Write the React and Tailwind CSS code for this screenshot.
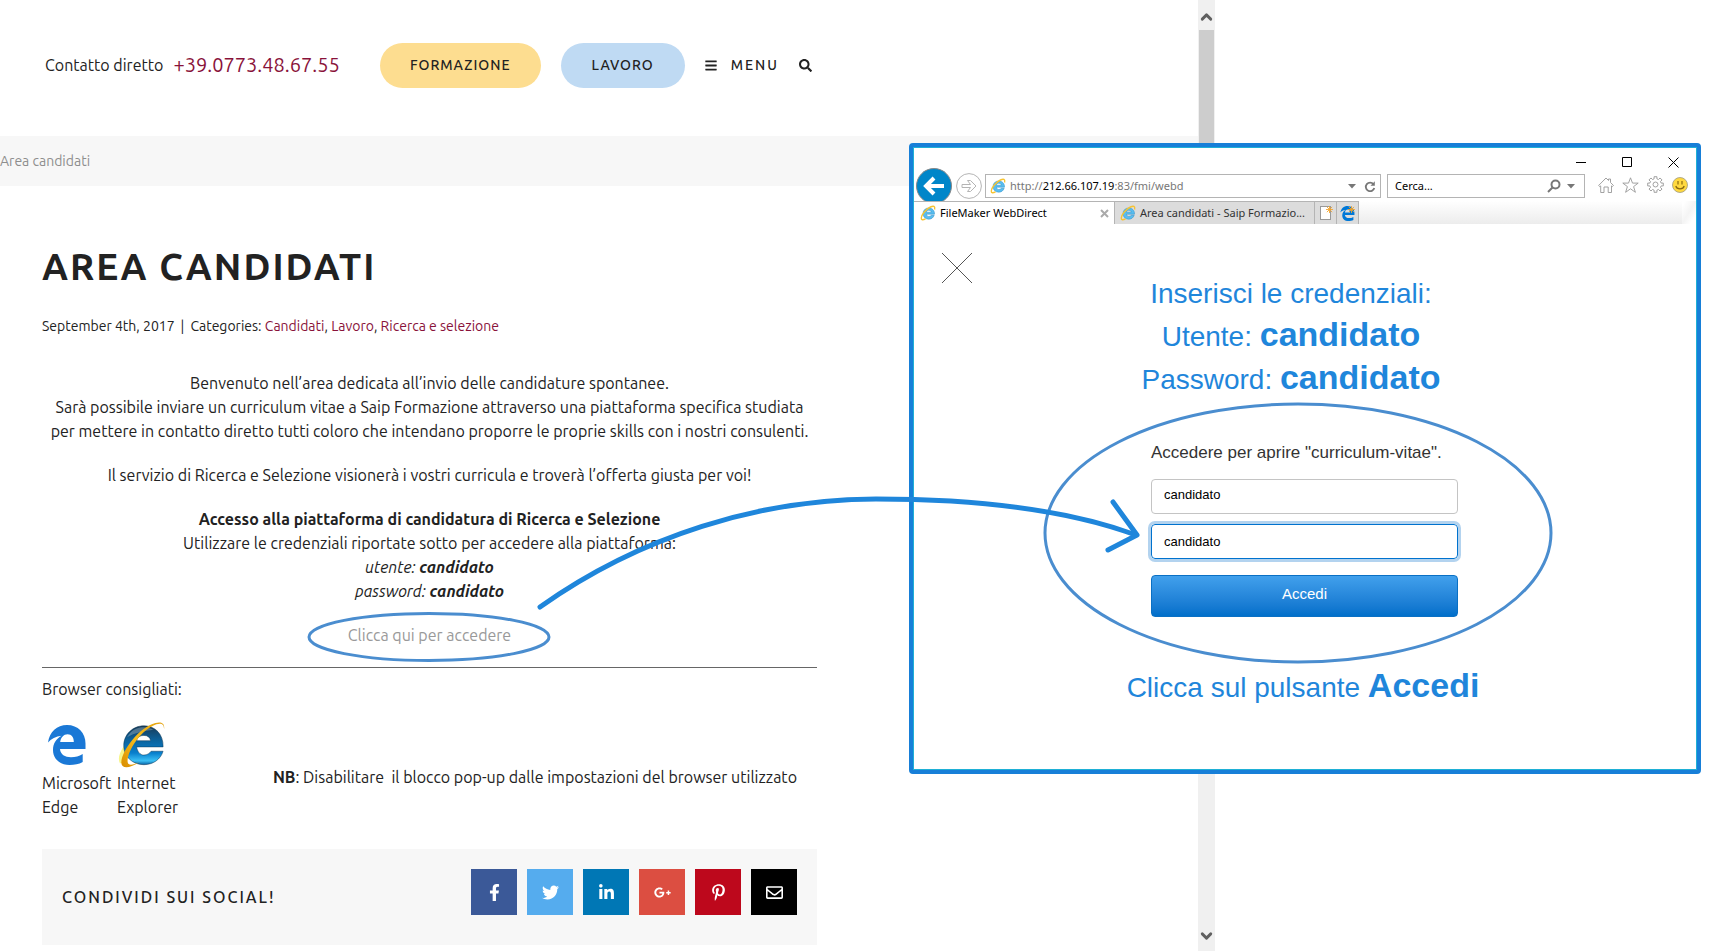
import React from 'react';
import { FaBars, FaSearch, FaFacebookF, FaTwitter, FaLinkedinIn, FaGooglePlusG, FaPinterestP, FaRegEnvelope } from 'react-icons/fa';
import { ChevronUp, ChevronDown } from 'lucide-react';

const SOCIAL = [
  { name: 'Facebook', Icon: FaFacebookF, color: 'bg-[#3b5998]' },
  { name: 'Twitter', Icon: FaTwitter, color: 'bg-[#55acee]' },
  { name: 'LinkedIn', Icon: FaLinkedinIn, color: 'bg-[#0077b5]' },
  { name: 'Google+', Icon: FaGooglePlusG, color: 'bg-[#dc4e41]' },
  { name: 'Pinterest', Icon: FaPinterestP, color: 'bg-[#bd081c]' },
  { name: 'Email', Icon: FaRegEnvelope, color: 'bg-black' },
];

function EdgeLogo({ className, fill = '#1a78d6' }) {
  return (
    <svg viewBox="0 0 38 40" className={className} fill={fill}>
      <path d="M0 17.500C1.500 7 9 0 19 0c11 0 18.500 8 18.500 18.500V24H12c.4 5.500 5 8.200 11 8.200 4.500 0 8-1 11.700-3.200V37c-4 2.200-8 3-13.200 3C11.500 40 5 33.500 5 25c0-6 3-11.200 8.500-14.200C8 11.500 3 14 0 17.500zM12.200 17h13.600c0-4.500-2-7.700-6.300-7.700-3.800 0-6.600 3.200-7.300 7.700z" />
    </svg>
  );
}

function ExplorerLogo() {
  return (
    <svg viewBox="0 0 50 50" className="mb-[2px] h-12 w-12">
      <defs>
        <linearGradient id="ieBody" x1="0" y1="0" x2="0" y2="1">
          <stop offset="0" stopColor="#173a57" />
          <stop offset=".35" stopColor="#0d6199" />
          <stop offset=".7" stopColor="#087fcd" />
          <stop offset=".9" stopColor="#3cc0f5" />
          <stop offset="1" stopColor="#0761a5" />
        </linearGradient>
        <linearGradient id="ieRing" x1="0" y1="1" x2="1" y2="0">
          <stop offset="0" stopColor="#d98d00" />
          <stop offset=".5" stopColor="#f7bd1b" />
          <stop offset="1" stopColor="#e2a110" />
        </linearGradient>
      </defs>
      <path d="M3 44C-1 37 7 23 19 13c-6 10-11 20-10 31z" fill="#f7f58a" />
      <path d="M48 27H20.500c.5 4.500 3.500 8.500 7.500 8.500 3.500 0 6-2 7.500-4H48C45.500 40 37.500 45.500 28 45.500 16 45.500 7 37 7 25.500S16.500 5 28 5c12 0 20.500 9 20 22zM20.500 20.500h14.500c-.5-3.500-3-5.500-7-5.500s-7 2-7.500 5.500z" fill="url(#ieBody)" stroke="#0b3350" strokeWidth=".5" />
      <path d="M10.500 17C15 9 21 6.500 28 6.500c4 0 7 1 10 2.500-9 1-20 3-27.500 8z" fill="#fff" fillOpacity=".25" />
      <path d="M49 8.500C50 2 46 .5 40 2 24 6 5 30 4.500 43c-.2 6 6.500 8 18.500 0-7.500 3.500-12 3.500-12-1C11 31 25 9 41 3.500c5-1.700 8-.5 8 5z" fill="url(#ieRing)" />
    </svg>
  );
}

function ExplorerFavicon() {
  return (
    <svg viewBox="0 0 16 16" className="h-4 w-4 shrink-0">
      <path d="M14.500 9.200H6.400c.2 1.500 1.200 2.300 2.500 2.300 1 0 1.800-.4 2.300-1.200h3c-.9 2.500-2.900 3.900-5.500 3.900C5.300 14.200 3 11.800 3 8.600S5.400 3 8.700 3c3.600 0 6 2.500 5.800 6.200zM6.400 7.200h4.900c-.2-1.200-1.200-2-2.500-2s-2.200.8-2.400 2z" fill="#58bdf0" stroke="#2f8fc6" strokeWidth=".5" />
      <path d="M14.600 4.500C15.300 1.200 13.500.6 10.500 2 6 4 1.500 9.500 1.300 13c-.1 2 1.500 2.300 4.200.9" fill="none" stroke="#f6c332" strokeWidth="1.400" />
    </svg>
  );
}

function Sparkle({ className }) {
  return (
    <svg viewBox="0 0 8 8" className={className} stroke="#f3a32b" strokeWidth="1">
      <path d="M4 0v8M0 4h8M1 1l6 6M7 1L1 7" />
    </svg>
  );
}

function SiteHeader() {
  return (
    <header className="flex h-[136px] items-center pb-[6px] pl-[45px] pr-4">
      <p className="flex items-center gap-[10px] whitespace-nowrap">
        Contatto diretto
        <a href="tel:+390773486755" className="text-xl text-[#89123a]">+39.0773.48.67.55</a>
      </p>
      <nav className="ml-10 flex items-center text-sm font-medium">
        <a href="#formazione" className="flex h-[45px] w-[161px] items-center justify-center rounded-full bg-[#fddd90] tracking-[1px]">FORMAZIONE</a>
        <a href="#lavoro" className="ml-5 flex h-[45px] w-[124px] items-center justify-center rounded-full bg-[#bfdaf3] tracking-[1px]">LAVORO</a>
        <button className="ml-5 flex items-center gap-[14px] tracking-[2px]">
          <FaBars className="h-[13px] w-3" />
          MENU
        </button>
        <button aria-label="Cerca" className="ml-5">
          <FaSearch className="h-[13px] w-[13px]" />
        </button>
      </nav>
    </header>
  );
}

function Article() {
  return (
    <main className="ml-[42px] w-[775px] max-w-full">
      <h1 className="mt-[59px] text-[37px] font-bold leading-[44px] tracking-[2px]">AREA CANDIDATI</h1>
      <p className="mt-[27px] text-sm leading-5">
        September 4th, 2017<span className="mx-[6px]">|</span>Categories:{' '}
        <a href="#candidati" className="text-[#89123a]">Candidati</a>,{' '}
        <a href="#lavoro" className="text-[#89123a]">Lavoro</a>,{' '}
        <a href="#ricerca" className="text-[#89123a]">Ricerca e selezione</a>
      </p>

      <div className="mt-[35px] flex flex-col gap-5 text-center">
        <p>
          Benvenuto nell’area dedicata all’invio delle candidature spontanee.<br />
          Sarà possibile inviare un curriculum vitae a Saip Formazione attraverso una piattaforma specifica studiata<br />
          per mettere in contatto diretto tutti coloro che intendano proporre le proprie skills con i nostri consulenti.
        </p>
        <p>Il servizio di Ricerca e Selezione visionerà i vostri curricula e troverà l’offerta giusta per voi!</p>
        <p>
          <strong>Accesso alla piattaforma di candidatura di Ricerca e Selezione</strong><br />
          Utilizzare le credenziali riportate sotto per accedere alla piattaforma:<br />
          <em>utente: <strong>candidato</strong></em><br />
          <em>password: <strong>candidato</strong></em>
        </p>
        <p>
          <a href="#accedi" className="relative inline-block text-[#999]">
            Clicca qui per accedere
            <svg viewBox="0 0 244 50" className="pointer-events-none absolute -top-[11px] left-1/2 h-[50px] w-[244px] max-w-none -translate-x-1/2">
              <ellipse cx="122" cy="25" rx="120" ry="23.5" fill="none" stroke="#4a8dcf" strokeWidth="3" />
            </svg>
          </a>
        </p>
      </div>

      <hr className="mt-5 border-[#666]" />
      <p className="mt-[9px]">Browser consigliati:</p>

      <div className="mt-5 flex items-end">
        <div className="w-[75px]">
          <EdgeLogo className="mb-[6px] ml-[6px] h-10 w-[38px]" />
          Microsoft Edge
        </div>
        <div className="w-[75px]">
          <ExplorerLogo />
          Internet Explorer
        </div>
        <p className="mb-[30px] ml-auto mr-5 whitespace-pre"><strong>NB</strong>: Disabilitare  il blocco pop-up dalle impostazioni del browser utilizzato</p>
      </div>

      <section className="mt-[30px] flex items-start justify-between bg-[#f7f7f7] px-5 pb-[30px] pt-5">
        <h2 className="mt-4 text-base font-medium tracking-[2px]">CONDIVIDI SUI SOCIAL!</h2>
        <ul className="flex gap-[10px]">
          {SOCIAL.map(({ name, Icon, color }) => (
            <li key={name}>
              <a href={'#' + name} aria-label={name} className={`flex h-[46px] w-[46px] items-center justify-center text-white ${color}`}>
                <Icon className="h-[17px] w-[17px]" />
              </a>
            </li>
          ))}
        </ul>
      </section>
    </main>
  );
}

function ScrollBar() {
  return (
    <div className="flex w-[17px] shrink-0 flex-col items-center justify-between bg-[#f0f0f0]">
      <div className="flex w-full flex-col items-center pt-2">
        <ChevronUp className="mb-1 h-[18px] w-[17px] text-[#606060]" strokeWidth={4} />
        <div className="h-[300px] w-[15px] bg-[#cdcdcd]" />
      </div>
      <ChevronDown className="mb-[6px] h-[18px] w-[17px] text-[#606060]" strokeWidth={4} />
    </div>
  );
}

function WindowControls() {
  return (
    <div className="flex h-5 items-end justify-end gap-[35px] pr-[17px]">
      <button aria-label="Riduci a icona">
        <svg viewBox="0 0 11 11" className="h-[11px] w-[11px]"><path d="M0 5.500h10" stroke="#000" /></svg>
      </button>
      <button aria-label="Ingrandisci">
        <svg viewBox="0 0 11 11" className="h-[11px] w-[11px]"><path d="M.5.5h9v9h-9z" fill="none" stroke="#000" /></svg>
      </button>
      <button aria-label="Chiudi">
        <svg viewBox="0 0 11 11" className="h-[11px] w-[11px]"><path d="M.5.5l10 10M10.500.5l-10 10" stroke="#000" /></svg>
      </button>
    </div>
  );
}

function DropArrow() {
  return <svg viewBox="0 0 8 5" className="h-[5px] w-2 shrink-0"><path d="M0 0h8L4 4.500z" fill="#777" /></svg>;
}

function AddressRow() {
  return (
    <div className="flex h-[33px] items-end pl-[2px] pr-2">
      <button aria-label="Indietro" className="shrink-0">
        <svg viewBox="0 0 36 33" className="h-[33px] w-9">
          <circle cx="18" cy="18" r="17.500" fill="#0086c9" stroke="#888" />
          <path d="M28 18H11M18 10l-8 8 8 8" fill="none" stroke="#fff" strokeWidth="4" />
        </svg>
      </button>
      <button aria-label="Avanti" className="mb-[2px] ml-1 shrink-0">
        <svg viewBox="0 0 26 26" className="h-[26px] w-[26px]" fill="none" stroke="#b4b4b4">
          <circle cx="13" cy="13" r="12.400" />
          <path d="M6 11.500h8.500L11.500 7.500h3L20 13l-5.500 5.500h-3l3-4H6z" />
        </svg>
      </button>
      <div className="mb-[3px] ml-[3px] flex h-6 min-w-0 flex-1 items-center border border-[#b4b4b4] px-1">
        <ExplorerFavicon />
        <div className="ml-1 flex-1 truncate text-[#777]">http://<span className="text-black">212.66.107.19</span>:83/fmi/webd</div>
        <DropArrow />
        <button aria-label="Aggiorna" className="ml-2">
          <svg viewBox="0 0 12 13" className="h-[13px] w-3">
            <path d="M9.500 4.200A4.300 4.300 0 1 0 10.300 8" fill="none" stroke="#777" strokeWidth="1.800" />
            <path d="M6.500 5.800h4.300V1.200z" fill="#777" />
          </svg>
        </button>
      </div>
      <div className="mb-[3px] ml-[6px] flex h-6 w-[198px] items-center border border-[#b4b4b4] pl-[7px] pr-[9px]">
        <input aria-label="Cerca" defaultValue="Cerca..." className="min-w-0 flex-1 outline-none" />
        <svg viewBox="0 0 14 14" className="h-[14px] w-[14px]" fill="none" stroke="#777" strokeWidth="2">
          <circle cx="8.500" cy="5.500" r="4" />
          <path d="M5.500 8.500L1 13" />
        </svg>
        <span className="ml-[6px] flex"><DropArrow /></span>
      </div>
      <div className="mb-2 ml-[13px] flex items-center gap-2">
        <svg viewBox="0 0 16 16" className="h-4 w-4" fill="none" stroke="#999" strokeWidth=".9">
          <path d="M.6 8.500L8 1l2.500 2.500V2h2v3.500l3 3-1.200 1-.8-.6v6.600h-3.300V10H6v5.500H2.700V8.900l-.9.700z" />
        </svg>
        <svg viewBox="0 0 17 16" className="h-4 w-[17px]" fill="none" stroke="#999" strokeWidth=".9">
          <path d="M8.500.8l2 5.300h5.700l-4.600 3.500 1.800 5.700-4.900-3.500-4.900 3.500 1.800-5.700L.8 6.100h5.700z" />
        </svg>
        <svg viewBox="0 0 24 24" className="h-[17px] w-[17px]" fill="none" stroke="#999" strokeWidth="1.300">
          <path d="M10 1h4v3l2.200 1 2.200-2.200 2.800 2.800L19 7.800 20 10h3v4h-3l-1 2.200 2.200 2.200-2.800 2.800-2.200-2.200-2.200 1v3h-4v-3l-2.200-1-2.200 2.200-2.800-2.800L5 16.200 4 14H1v-4h3l1-2.200-2.200-2.200 2.800-2.800L7.800 5l2.200-1z" />
          <circle cx="12" cy="12" r="3.500" />
        </svg>
        <svg viewBox="0 0 16 16" className="h-4 w-4">
          <circle cx="8" cy="8" r="7.500" fill="#ffd940" stroke="#a09a80" strokeWidth=".8" />
          <path d="M6 4v3.500M10 4v3.500M3.800 9c1 3.800 7.400 3.800 8.400 0" fill="none" stroke="#8a6a10" strokeWidth="1.200" />
        </svg>
      </div>
    </div>
  );
}

function TabRow() {
  return (
    <div className="flex h-[23px]">
      <div className="flex w-[200px] items-center border-t border-[#b4b4b4] pl-[6px] pr-1">
        <ExplorerFavicon />
        <span className="ml-1 flex-1 whitespace-nowrap">FileMaker WebDirect</span>
        <button aria-label="Chiudi scheda">
          <svg viewBox="0 0 9 9" className="h-[9px] w-[11px]"><path d="M1 1l7 7M8 1L1 8" stroke="#aaa" strokeWidth="2" /></svg>
        </button>
      </div>
      <div className="flex w-[201px] items-center border border-b-0 border-[#b4b4b4] bg-[#dcdcdc] pl-[5px] text-[#333]">
        <ExplorerFavicon />
        <span className="ml-1 whitespace-nowrap">Area candidati - Saip Formazio...</span>
      </div>
      <button aria-label="Nuova scheda" className="relative flex w-[22px] items-center justify-center border-r border-t border-[#b4b4b4] bg-[#dcdcdc]">
        <span className="h-[14px] w-[11px] border border-[#999] bg-white" />
        <Sparkle className="absolute right-[3px] top-1 h-[7px] w-[7px]" />
      </button>
      <button aria-label="Apri in Edge" className="relative flex w-[22px] items-center justify-center border-r border-t border-[#b4b4b4] bg-[#dcdcdc]">
        <EdgeLogo className="h-[15px] w-[15px]" fill="#0078d7" />
        <Sparkle className="absolute right-[3px] top-1 h-[7px] w-[7px]" />
      </button>
      <div className="flex-1 bg-linear-to-b from-white to-[#ececec]" />
      <div className="w-[14px] bg-linear-to-br from-white from-10% via-[#f4f4f4] to-white to-80%" />
    </div>
  );
}

function LoginForm() {
  return (
    <form className="relative ml-[237px] mt-[42px] w-[307px]" onSubmit={(e) => e.preventDefault()}>
      <svg viewBox="0 0 510 262" className="pointer-events-none absolute -left-[108px] -top-[41px] h-[262px] w-[510px] max-w-none">
        <ellipse cx="255" cy="131" rx="253" ry="129" fill="none" stroke="#4a8dcf" strokeWidth="3" />
      </svg>
      <p className="whitespace-nowrap text-[17px] leading-5 text-[#333]">Accedere per aprire "curriculum-vitae".</p>
      <input aria-label="Utente" defaultValue="candidato" className="relative mt-4 block h-[35px] w-full rounded border border-[#c4c4c4] bg-white px-3 pb-1 text-[13px] text-black outline-none" />
      <input aria-label="Password" defaultValue="candidato" className="relative mt-[10px] block h-[35px] w-full rounded border border-[#0072ce] bg-white px-3 text-[13px] text-black outline-3 outline-[#b3d3ef]" />
      <button className="relative mt-4 block h-[42px] w-full rounded border border-[#0a70c4] bg-linear-to-b from-[#41a0ec] to-[#006fca] pb-1 text-[15px] leading-5 text-white">Accedi</button>
    </form>
  );
}

function BrowserWindow() {
  return (
    <div className="absolute left-[909px] top-[143px] w-[792px] rounded border-4 border-[#177fd8] bg-white p-px pb-[61px] text-black inset-ring-1 inset-ring-[#1fb0d6]">
      <div className="font-['Noto_Sans',sans-serif] text-[11px] leading-5">
        <WindowControls />
        <AddressRow />
        <TabRow />
      </div>
      <div className="relative pt-12 font-['Liberation_Sans',Arial,sans-serif] text-[28px] leading-[43px] text-[#1f86db]">
        <button aria-label="Chiudi" className="absolute left-7 top-[29px]">
          <svg viewBox="0 0 30 30" className="h-[30px] w-[30px]"><path d="M0 0l30 30M30 0L0 30" stroke="#555" /></svg>
        </button>
        <div className="mr-7 text-center">
          <p>Inserisci le credenziali:</p>
          <p>Utente: <strong className="text-[34px] leading-none">candidato</strong></p>
          <p>Password: <strong className="text-[34px] leading-none">candidato</strong></p>
        </div>
        <LoginForm />
        <p className="mr-1 mt-[49px] text-center">Clicca sul pulsante <strong className="text-[34px] leading-none">Accedi</strong></p>
      </div>
    </div>
  );
}

export default function App() {
  return (
    <div className="relative min-h-screen overflow-hidden bg-white font-['Ubuntu','Noto_Sans',sans-serif] text-base text-[#222]">
      <div className="flex min-h-screen w-full max-w-[1215px]">
        <div className="min-w-0 flex-1">
          <SiteHeader />
          <div className="flex h-[50px] items-center bg-[#f7f7f7] text-sm text-[#8e8e8e]">Area candidati</div>
          <Article />
        </div>
        <ScrollBar />
      </div>

      <BrowserWindow />

      {/* arrow from the link to the login form */}
      <svg viewBox="0 0 610 120" className="pointer-events-none absolute left-[536px] top-[494px] h-[120px] w-[610px]" fill="none" stroke="#1f86db" strokeWidth="5" strokeLinecap="round" strokeLinejoin="round">
        <path d="M4 113C104 42 224 5 340 5s200 14 260 36" />
        <path d="M577 8l24 33-29 15" />
      </svg>
    </div>
  );
}
